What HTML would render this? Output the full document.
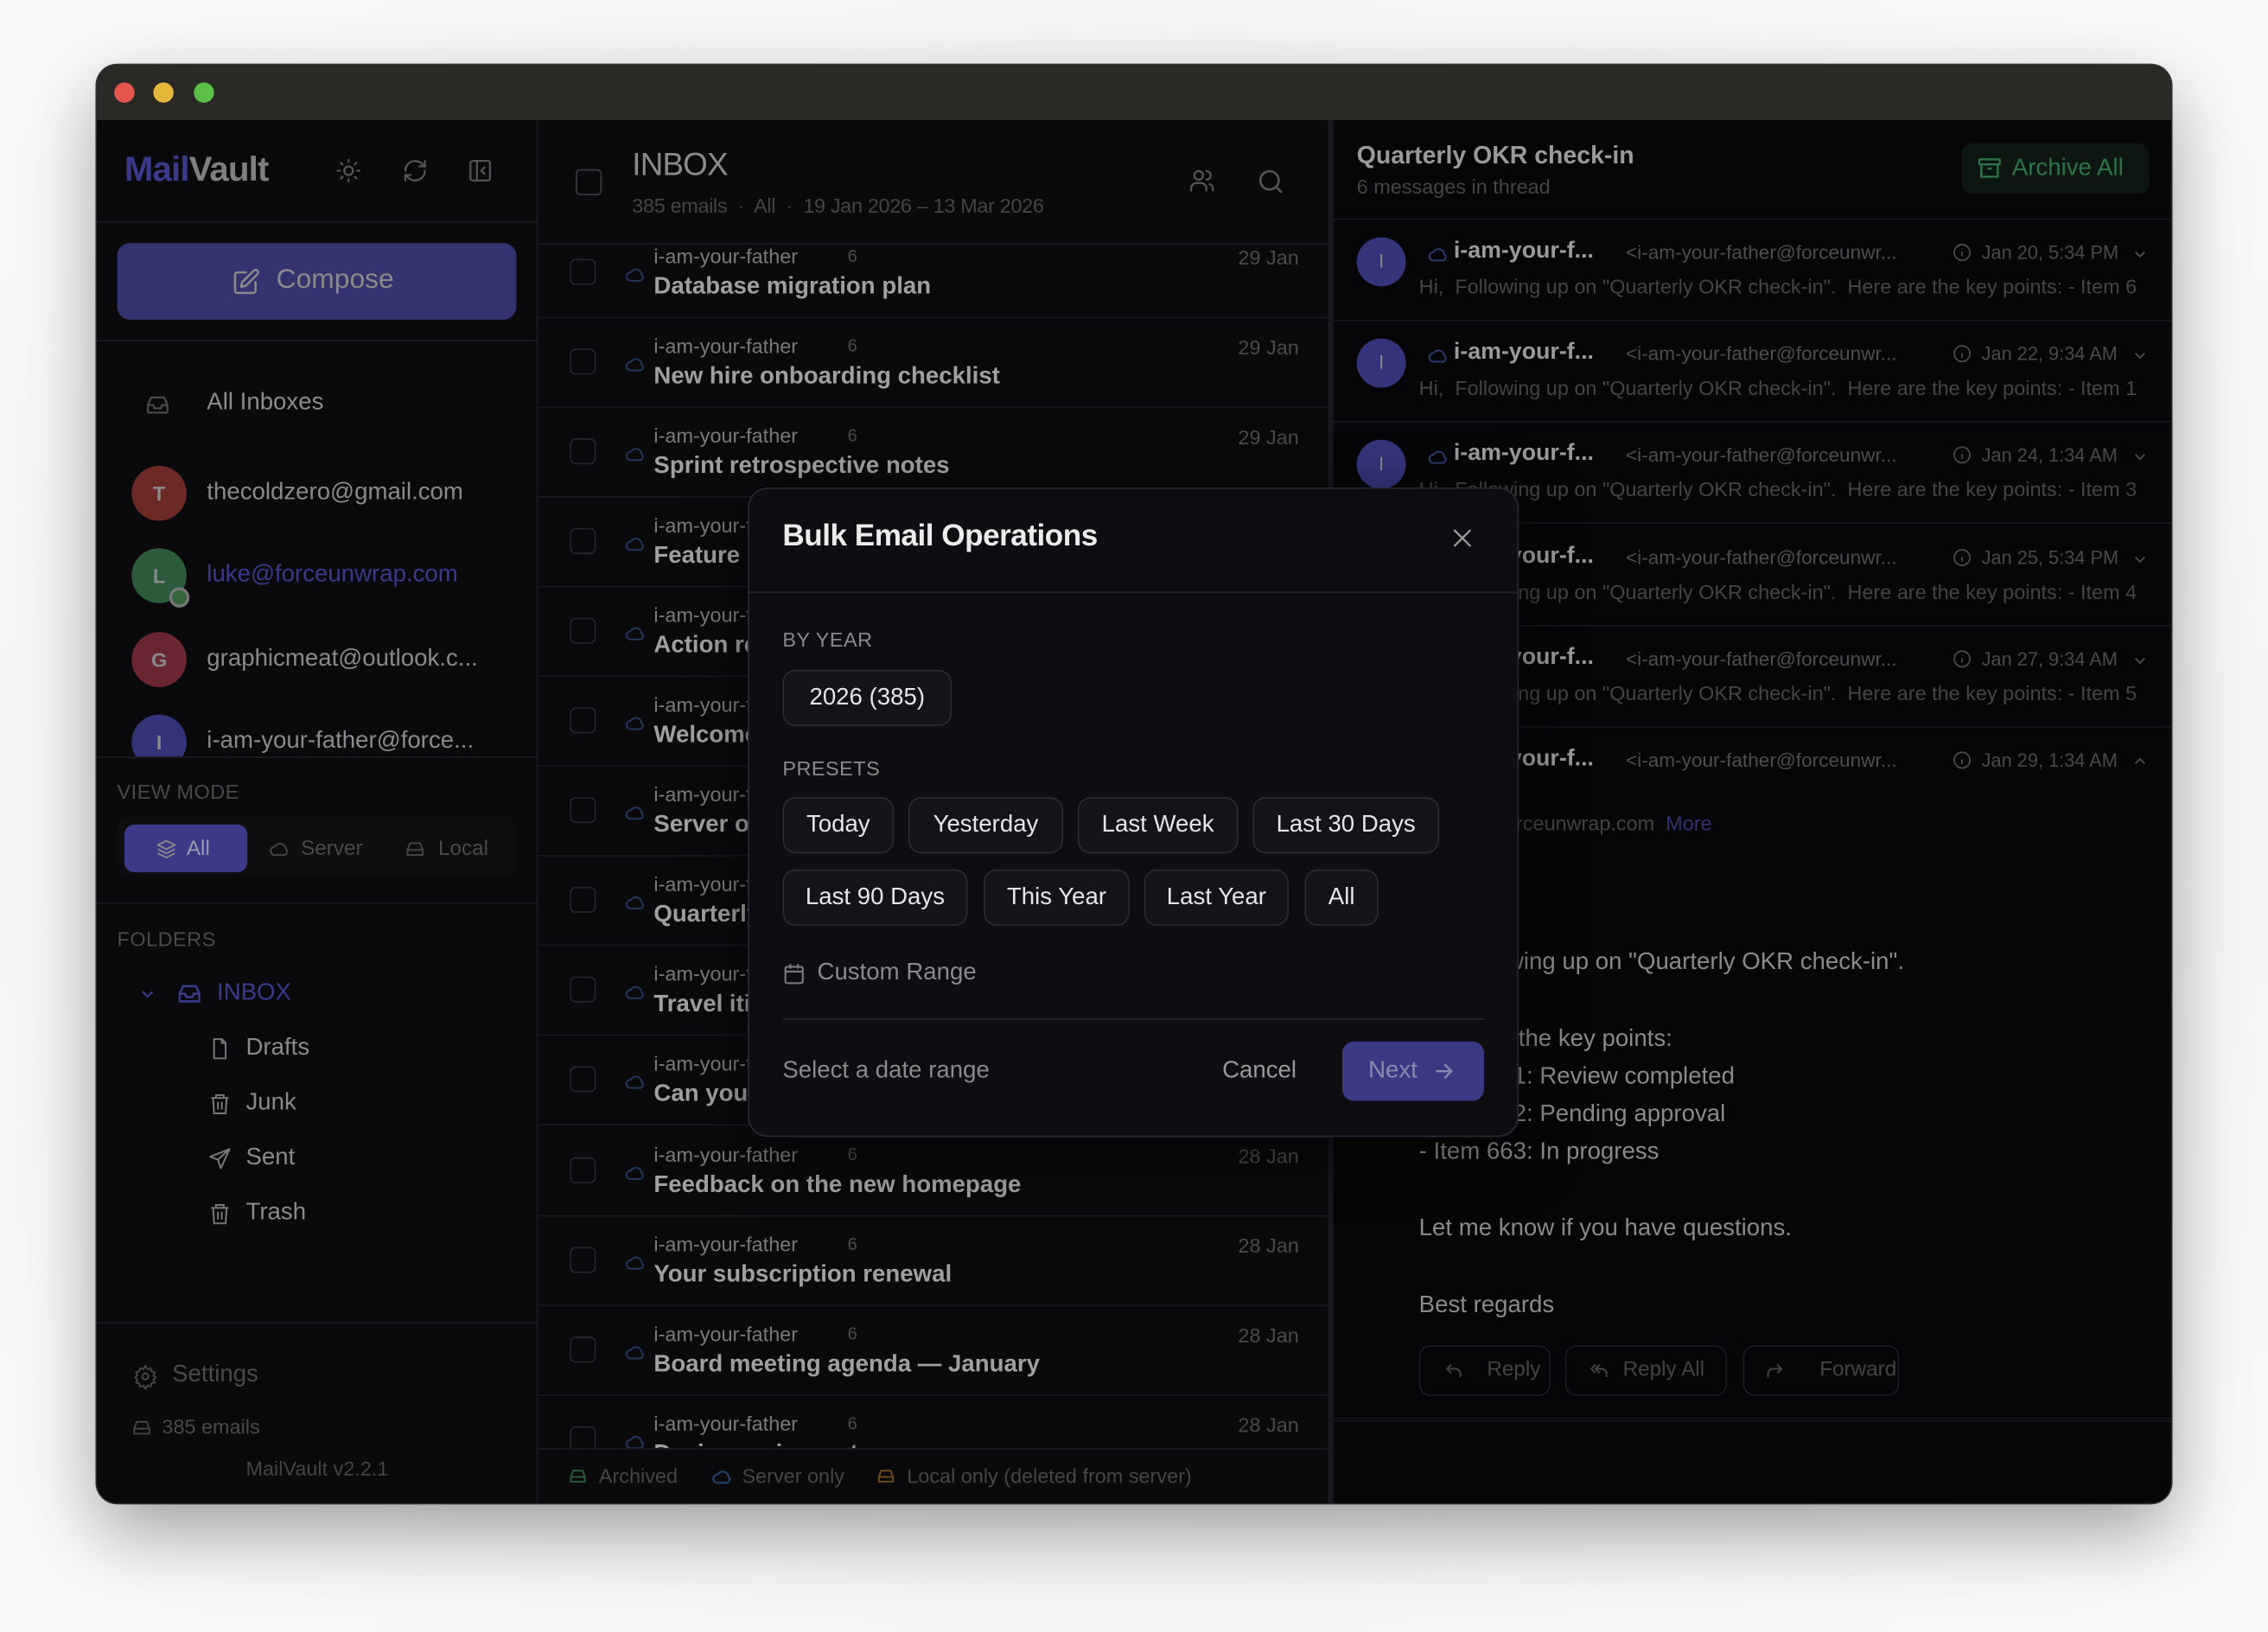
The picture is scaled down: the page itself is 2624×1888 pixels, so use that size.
<!DOCTYPE html>
<html><head><meta charset="utf-8"><style>
*{margin:0;padding:0;box-sizing:border-box}
html,body{width:2624px;height:1888px;overflow:hidden;background:#f3f3f3;font-family:"Liberation Sans",sans-serif}
#s{position:absolute;left:0;top:0;width:1568px;height:1128px;transform:scale(1.67347);transform-origin:0 0;background:radial-gradient(ellipse at 50% 50%,#e6e6e6 0%,#f5f5f5 70%,#fafafa 100%)}
.a{position:absolute;white-space:nowrap}
.win{position:absolute;left:67px;top:45px;width:1434px;height:994px;border-radius:14px;overflow:hidden;background:#0a0a0d;box-shadow:0 20px 50px rgba(0,0,0,.35),0 0 0 1px #3a3a3a}
.tb{position:absolute;left:0;top:0;width:1434px;height:38px;background:#292926}
.dot{position:absolute;top:12px;width:14px;height:14px;border-radius:50%}
svg{position:absolute;overflow:visible}
.ln{position:absolute;height:1px;background:#1b1b22}
.av{position:absolute;width:38px;height:38px;border-radius:50%;color:#8a8a8a;font-weight:bold;font-size:14px;text-align:center;line-height:38px}
.acc{position:absolute;left:76px;font-size:16.5px;color:#8a8a8a}
.fold{position:absolute;left:103px;font-size:16.5px;color:#8a8a8a}
.row{position:absolute;left:305px;width:546px;height:62px;border-bottom:1px solid #191920}
.row .cb{position:absolute;left:22px;top:12px;width:18px;height:18px;border:1.5px solid #26262c;border-radius:4px}
.row .nm{position:absolute;left:80px;top:1px;font-size:14px;color:#7a7a7a}
.row .ct{position:absolute;left:214px;top:2px;font-size:12px;color:#4a4a4a}
.row .dt{position:absolute;right:20px;top:2px;font-size:14px;color:#4a4a4a}
.row .sj{position:absolute;left:80px;top:20px;font-size:16.5px;font-weight:bold;color:#a0a0a0}
.msg{position:absolute;left:855px;width:579px;height:70px;border-bottom:1px solid #17171d}
.msg .av2{position:absolute;left:16px;top:12px;width:34px;height:34px;border-radius:50%;background:#34347a;color:#888;text-align:center;line-height:34px;font-size:13px}
.msg .n{position:absolute;left:83px;top:13px;font-size:16px;font-weight:bold;color:#9a9a9a}
.msg .e{position:absolute;left:202px;top:15px;font-size:13.5px;color:#4e4e4e}
.msg .d{position:absolute;left:448px;top:15px;font-size:13px;color:#4a4a4a}
.msg .p{position:absolute;left:59px;top:38px;font-size:14px;color:#454545;width:506px;overflow:hidden;white-space:nowrap}
.msg .ic1{left:65px;top:17px}
.msg .ic2{left:428px;top:16px}
.msg .ic3{left:552px;top:18px}
.chip{position:absolute;height:39px;border:1px solid #2a2b36;background:#13141a;border-radius:9px;color:#e6e6e6;font-size:16.5px;text-align:center;line-height:37px}
.lbl{position:absolute;font-size:14px;color:#8a8a8a;letter-spacing:.3px}
.bt{position:absolute;top:885px;height:35px;border:1px solid #1c1c22;border-radius:8px;color:#444;font-size:14.5px;line-height:33px}
.body{position:absolute;left:914px;font-size:16.5px;color:#8a8a8a}
</style></head><body><div id="s">
<div class="win">
 <div class="tb"></div>
 <div class="dot" style="left:12px;background:#e4564e"></div>
 <div class="dot" style="left:39px;background:#e3b73a"></div>
 <div class="dot" style="left:67px;background:#5cbf4a"></div>

 <div style="position:absolute;left:0;top:38px;width:305px;height:956px;background:#0a0a0d;border-right:1px solid #1b1b22"></div>
 <div class="a" style="left:19px;top:59px;font-size:24px;font-weight:bold;letter-spacing:-.5px"><span style="color:#3a3a8c">Mail</span><span style="color:#7f7f7f">Vault</span></div>
 <svg style="left:165px;top:64px" width="18" height="18" viewBox="0 0 24 24" fill="none" stroke="#555" stroke-width="1.8" stroke-linecap="round"><circle cx="12" cy="12" r="4"/><path d="M12 2v2M12 20v2M4.9 4.9l1.4 1.4M17.7 17.7l1.4 1.4M2 12h2M20 12h2M4.9 19.1l1.4-1.4M17.7 6.3l1.4-1.4"/></svg>
 <svg style="left:211px;top:64px" width="18" height="18" viewBox="0 0 24 24" fill="none" stroke="#555" stroke-width="1.8" stroke-linecap="round"><path d="M3 12a9 9 0 0 1 15.5-6.2L21 8M21 3v5h-5M21 12a9 9 0 0 1-15.5 6.2L3 16M3 21v-5h5"/></svg>
 <svg style="left:256px;top:64px" width="18" height="18" viewBox="0 0 24 24" fill="none" stroke="#555" stroke-width="1.8" stroke-linecap="round"><rect x="3" y="3" width="18" height="18" rx="2"/><path d="M9 3v18M16 9l-3 3 3 3"/></svg>
 <div class="ln" style="left:0;top:108px;width:305px"></div>
 <div style="position:absolute;left:14px;top:123px;width:276px;height:53px;border-radius:9px;background:#33336f"></div>
 <svg style="left:93px;top:140px" width="20" height="20" viewBox="0 0 24 24" fill="none" stroke="#8a8a8a" stroke-width="1.8" stroke-linecap="round" stroke-linejoin="round"><path d="M12 4H5a2 2 0 0 0-2 2v13a2 2 0 0 0 2 2h13a2 2 0 0 0 2-2v-7"/><path d="M18.5 2.5a2.1 2.1 0 0 1 3 3L12 15l-4 1 1-4z"/></svg>
 <div class="a" style="left:124px;top:138px;font-size:19px;color:#8a8a8a">Compose</div>
 <div class="ln" style="left:0;top:190px;width:305px"></div>
 <svg style="left:33px;top:226px" width="18" height="18" viewBox="0 0 24 24" fill="none" stroke="#4a4a4a" stroke-width="1.8" stroke-linejoin="round"><path d="M3 12l3-7h12l3 7v6a1 1 0 0 1-1 1H4a1 1 0 0 1-1-1z"/><path d="M3 12h5l1 3h6l1-3h5"/></svg>
 <div class="acc" style="top:224px;color:#8c8c8c">All Inboxes</div>
 <div class="av" style="left:24px;top:277px;background:#6c2a26">T</div>
 <div class="acc" style="top:286px">thecoldzero@gmail.com</div>
 <div class="av" style="left:24px;top:334px;background:#2c5b3c">L</div>
 <div style="position:absolute;left:50px;top:361px;width:14px;height:14px;border-radius:50%;background:#33663a;border:2.5px solid #777"></div>
 <div class="acc" style="top:343px;color:#3a3a8c">luke@forceunwrap.com</div>
 <div class="av" style="left:24px;top:392px;background:#6a2631">G</div>
 <div class="acc" style="top:401px">graphicmeat@outlook.c...</div>
 <div style="position:absolute;left:0;top:440px;width:305px;height:38px;overflow:hidden">
  <div class="av" style="left:24px;top:9px;background:#33337a">I</div>
  <div class="acc" style="top:18px">i-am-your-father@force...</div>
 </div>
 <div class="ln" style="left:0;top:478px;width:305px"></div>
 <div class="lbl" style="left:14px;top:494px;color:#4a4a4a">VIEW MODE</div>
 <div style="position:absolute;left:14px;top:519px;width:276px;height:41px;border-radius:9px;background:#0e0e11"></div>
 <div style="position:absolute;left:19px;top:525px;width:85px;height:33px;border-radius:7px;background:#3a3a88"></div>
 <svg style="left:41px;top:535px" width="14" height="14" viewBox="0 0 24 24" fill="none" stroke="#888" stroke-width="2" stroke-linejoin="round"><path d="M12 2l10 5-10 5L2 7z"/><path d="M2 12l10 5 10-5M2 17l10 5 10-5"/></svg>
 <div class="a" style="left:62px;top:534px;font-size:14.5px;color:#9a9ab0">All</div>
 <svg style="left:119px;top:535px" width="14" height="14" viewBox="0 0 24 24" fill="none" stroke="#444" stroke-width="2"><path d="M7 19a5 5 0 0 1 0-10 7 7 0 0 1 13 3 4 4 0 0 1-2 7z"/></svg>
 <div class="a" style="left:141px;top:534px;font-size:14.5px;color:#4a4a4a">Server</div>
 <svg style="left:213px;top:535px" width="14" height="14" viewBox="0 0 24 24" fill="none" stroke="#444" stroke-width="2"><path d="M3 13l3-8h12l3 8v6H3z M3 13h18"/></svg>
 <div class="a" style="left:236px;top:534px;font-size:14.5px;color:#4a4a4a">Local</div>
 <div class="ln" style="left:0;top:579px;width:305px"></div>
 <div class="lbl" style="left:14px;top:596px;color:#4a4a4a">FOLDERS</div>
 <svg style="left:29px;top:636px" width="12" height="12" viewBox="0 0 24 24" fill="none" stroke="#3a3a8c" stroke-width="2.5"><path d="M5 9l7 7 7-7"/></svg>
 <svg style="left:55px;top:633px" width="18" height="18" viewBox="0 0 24 24" fill="none" stroke="#3a3a8c" stroke-width="2" stroke-linejoin="round"><path d="M3 12l3-7h12l3 7v7H3z"/><path d="M3 12h5l1 3h6l1-3h5"/></svg>
 <div class="a" style="left:83px;top:632px;font-size:16.5px;color:#3a3a8c">INBOX</div>
 <svg style="left:77px;top:672px" width="16" height="16" viewBox="0 0 24 24" fill="none" stroke="#777" stroke-width="1.8" stroke-linejoin="round"><path d="M14 2H6v20h12V6z"/><path d="M14 2v4h4"/></svg>
 <div class="fold" style="top:670px">Drafts</div>
 <svg style="left:77px;top:710px" width="16" height="16" viewBox="0 0 24 24" fill="none" stroke="#777" stroke-width="1.8"><path d="M3 6h18M8 6V3h8v3M5 6l1 16h12l1-16M10 10v8M14 10v8"/></svg>
 <div class="fold" style="top:708px">Junk</div>
 <svg style="left:77px;top:748px" width="16" height="16" viewBox="0 0 24 24" fill="none" stroke="#777" stroke-width="1.8" stroke-linejoin="round"><path d="M22 2L2 10l8 3 3 9z M22 2L10 13"/></svg>
 <div class="fold" style="top:746px">Sent</div>
 <svg style="left:77px;top:786px" width="16" height="16" viewBox="0 0 24 24" fill="none" stroke="#777" stroke-width="1.8"><path d="M3 6h18M8 6V3h8v3M5 6l1 16h12l1-16M10 10v8M14 10v8"/></svg>
 <div class="fold" style="top:784px">Trash</div>
 <div class="ln" style="left:0;top:869px;width:305px"></div>
 <svg style="left:25px;top:898px" width="17" height="17" viewBox="0 0 24 24" fill="none" stroke="#444" stroke-width="1.8"><circle cx="12" cy="12" r="3"/><path d="M12 2l2 3 3-1 1 3 3 1-1 3 2 2-2 2 1 3-3 1-1 3-3-1-2 3-2-3-3 1-1-3-3-1 1-3-2-2 2-2-1-3 3-1 1-3 3 1z"/></svg>
 <div class="a" style="left:52px;top:896px;font-size:16.5px;color:#4a4a4a">Settings</div>
 <svg style="left:24px;top:935px" width="14" height="14" viewBox="0 0 24 24" fill="none" stroke="#444" stroke-width="2"><path d="M3 13l3-8h12l3 8v6H3z M3 13h18"/></svg>
 <div class="a" style="left:45px;top:933px;font-size:14px;color:#4a4a4a">385 emails</div>
 <div class="a" style="left:103px;top:962px;font-size:14px;color:#444">MailVault v2.2.1</div>

 <div style="position:absolute;left:305px;top:38px;width:546px;height:956px;background:#0a0a0d"></div>
 <div style="position:absolute;left:331px;top:72px;width:18px;height:18px;border:1.5px solid #3a3a40;border-radius:3px"></div>
 <div class="a" style="left:370px;top:56px;font-size:22px;color:#8a8a8a;letter-spacing:-.5px">INBOX</div>
 <div class="a" style="left:370px;top:89px;font-size:14px;color:#454545;letter-spacing:-.2px">385 emails&nbsp; ·&nbsp; All&nbsp; ·&nbsp; 19 Jan 2026 – 13 Mar 2026</div>
 <svg style="left:755px;top:71px" width="18" height="18" viewBox="0 0 24 24" fill="none" stroke="#555" stroke-width="1.8" stroke-linecap="round"><circle cx="9" cy="7" r="4"/><path d="M2 21v-2a5 5 0 0 1 5-5h4a5 5 0 0 1 5 5v2M16 3a4 4 0 0 1 0 8M22 21v-2a4 4 0 0 0-3-4"/></svg>
 <svg style="left:802px;top:71px" width="19" height="19" viewBox="0 0 24 24" fill="none" stroke="#555" stroke-width="2" stroke-linecap="round"><circle cx="11" cy="11" r="8"/><path d="M21 21l-4.3-4.3"/></svg>
 <div class="ln" style="left:305px;top:123px;width:546px"></div>

 <div style="position:absolute;left:851px;top:38px;width:4px;height:956px;background:#17171c"></div>
 <div style="position:absolute;left:855px;top:38px;width:579px;height:956px;background:#060608"></div>
 <div class="a" style="left:871px;top:53px;font-size:17px;font-weight:bold;color:#9a9a9a">Quarterly OKR check-in</div>
 <div class="a" style="left:871px;top:76px;font-size:14px;color:#454545">6 messages in thread</div>
 <div style="position:absolute;left:1289px;top:54px;width:130px;height:35px;border-radius:8px;background:#0d1611"></div>
 <svg style="left:1300px;top:63px" width="17" height="17" viewBox="0 0 24 24" fill="none" stroke="#2e7448" stroke-width="2"><rect x="2" y="3" width="20" height="5" rx="1"/><path d="M4 8v12h16V8M10 12h4"/></svg>
 <div class="a" style="left:1324px;top:62px;font-size:16.5px;color:#2e7448">Archive All</div>
 <div class="ln" style="left:855px;top:106px;width:579px;background:#17171d"></div>

 <div style="position:absolute;left:305px;top:956px;width:546px;height:38px;background:#0a0a0d;border-top:1px solid #1b1b22"></div>
 <svg style="left:326px;top:969px" width="13" height="13" viewBox="0 0 24 24" fill="none" stroke="#2a5a3a" stroke-width="2.2"><path d="M3 13l3-8h12l3 8v6H3z M3 13h18"/></svg>
 <div class="a" style="left:347px;top:967px;font-size:14px;color:#464646">Archived</div>
 <svg style="left:425px;top:969px" width="14" height="14" viewBox="0 0 24 24" fill="none" stroke="#25406a" stroke-width="2.2"><path d="M7 19a5 5 0 0 1 0-10 7 7 0 0 1 13 3 4 4 0 0 1-2 7z"/></svg>
 <div class="a" style="left:446px;top:967px;font-size:14px;color:#464646">Server only</div>
 <svg style="left:539px;top:969px" width="13" height="13" viewBox="0 0 24 24" fill="none" stroke="#6a4a1c" stroke-width="2.2"><path d="M3 13l3-8h12l3 8v6H3z M3 13h18"/></svg>
 <div class="a" style="left:560px;top:967px;font-size:14px;color:#464646">Local only (deleted from server)</div>
</div>

<div style="position:absolute;left:67px;top:45px;width:1434px;height:994px;overflow:hidden;border-radius:14px">
 <div style="position:absolute;left:305px;top:124px;width:546px;height:832px;overflow:hidden">
  <div style="position:absolute;left:-305px;top:-124px">
   <div class="row" style="top:113px"><div class="cb" style="top:21px"></div><svg style="left:60px;top:25px" width="14" height="14" viewBox="0 0 24 24" fill="none" stroke="#24365e" stroke-width="2"><path d="M7 19a5 5 0 0 1 0-10 7 7 0 0 1 13 3 4 4 0 0 1-2 7z"/></svg><div class="nm" style="top:11px">i-am-your-father</div><div class="ct" style="top:12px">6</div><div class="dt" style="top:12px">29 Jan</div><div class="sj" style="top:31px">Database migration plan</div></div>
   <div class="row" style="top:175px"><div class="cb" style="top:21px"></div><svg style="left:60px;top:25px" width="14" height="14" viewBox="0 0 24 24" fill="none" stroke="#24365e" stroke-width="2"><path d="M7 19a5 5 0 0 1 0-10 7 7 0 0 1 13 3 4 4 0 0 1-2 7z"/></svg><div class="nm" style="top:11px">i-am-your-father</div><div class="ct" style="top:12px">6</div><div class="dt" style="top:12px">29 Jan</div><div class="sj" style="top:31px">New hire onboarding checklist</div></div>
   <div class="row" style="top:237px"><div class="cb" style="top:21px"></div><svg style="left:60px;top:25px" width="14" height="14" viewBox="0 0 24 24" fill="none" stroke="#24365e" stroke-width="2"><path d="M7 19a5 5 0 0 1 0-10 7 7 0 0 1 13 3 4 4 0 0 1-2 7z"/></svg><div class="nm" style="top:11px">i-am-your-father</div><div class="ct" style="top:12px">6</div><div class="dt" style="top:12px">29 Jan</div><div class="sj" style="top:31px">Sprint retrospective notes</div></div>
   <div class="row" style="top:299px"><div class="cb" style="top:21px"></div><svg style="left:60px;top:25px" width="14" height="14" viewBox="0 0 24 24" fill="none" stroke="#24365e" stroke-width="2"><path d="M7 19a5 5 0 0 1 0-10 7 7 0 0 1 13 3 4 4 0 0 1-2 7z"/></svg><div class="nm" style="top:11px">i-am-your-father</div><div class="sj" style="top:31px">Feature request</div></div>
   <div class="row" style="top:361px"><div class="cb" style="top:21px"></div><svg style="left:60px;top:25px" width="14" height="14" viewBox="0 0 24 24" fill="none" stroke="#24365e" stroke-width="2"><path d="M7 19a5 5 0 0 1 0-10 7 7 0 0 1 13 3 4 4 0 0 1-2 7z"/></svg><div class="nm" style="top:11px">i-am-your-father</div><div class="sj" style="top:31px">Action required</div></div>
   <div class="row" style="top:423px"><div class="cb" style="top:21px"></div><svg style="left:60px;top:25px" width="14" height="14" viewBox="0 0 24 24" fill="none" stroke="#24365e" stroke-width="2"><path d="M7 19a5 5 0 0 1 0-10 7 7 0 0 1 13 3 4 4 0 0 1-2 7z"/></svg><div class="nm" style="top:11px">i-am-your-father</div><div class="sj" style="top:31px">Welcome aboard</div></div>
   <div class="row" style="top:485px"><div class="cb" style="top:21px"></div><svg style="left:60px;top:25px" width="14" height="14" viewBox="0 0 24 24" fill="none" stroke="#24365e" stroke-width="2"><path d="M7 19a5 5 0 0 1 0-10 7 7 0 0 1 13 3 4 4 0 0 1-2 7z"/></svg><div class="nm" style="top:11px">i-am-your-father</div><div class="sj" style="top:31px">Server outage</div></div>
   <div class="row" style="top:547px"><div class="cb" style="top:21px"></div><svg style="left:60px;top:25px" width="14" height="14" viewBox="0 0 24 24" fill="none" stroke="#24365e" stroke-width="2"><path d="M7 19a5 5 0 0 1 0-10 7 7 0 0 1 13 3 4 4 0 0 1-2 7z"/></svg><div class="nm" style="top:11px">i-am-your-father</div><div class="sj" style="top:31px">Quarterly OKR</div></div>
   <div class="row" style="top:609px"><div class="cb" style="top:21px"></div><svg style="left:60px;top:25px" width="14" height="14" viewBox="0 0 24 24" fill="none" stroke="#24365e" stroke-width="2"><path d="M7 19a5 5 0 0 1 0-10 7 7 0 0 1 13 3 4 4 0 0 1-2 7z"/></svg><div class="nm" style="top:11px">i-am-your-father</div><div class="sj" style="top:31px">Travel itinerary</div></div>
   <div class="row" style="top:671px"><div class="cb" style="top:21px"></div><svg style="left:60px;top:25px" width="14" height="14" viewBox="0 0 24 24" fill="none" stroke="#24365e" stroke-width="2"><path d="M7 19a5 5 0 0 1 0-10 7 7 0 0 1 13 3 4 4 0 0 1-2 7z"/></svg><div class="nm" style="top:11px">i-am-your-father</div><div class="sj" style="top:31px">Can you review</div></div>
   <div class="row" style="top:734px"><div class="cb" style="top:21px"></div><svg style="left:60px;top:25px" width="14" height="14" viewBox="0 0 24 24" fill="none" stroke="#24365e" stroke-width="2"><path d="M7 19a5 5 0 0 1 0-10 7 7 0 0 1 13 3 4 4 0 0 1-2 7z"/></svg><div class="nm" style="top:11px">i-am-your-father</div><div class="ct" style="top:12px">6</div><div class="dt" style="top:12px">28 Jan</div><div class="sj" style="top:31px">Feedback on the new homepage</div></div>
   <div class="row" style="top:796px"><div class="cb" style="top:21px"></div><svg style="left:60px;top:25px" width="14" height="14" viewBox="0 0 24 24" fill="none" stroke="#24365e" stroke-width="2"><path d="M7 19a5 5 0 0 1 0-10 7 7 0 0 1 13 3 4 4 0 0 1-2 7z"/></svg><div class="nm" style="top:11px">i-am-your-father</div><div class="ct" style="top:12px">6</div><div class="dt" style="top:12px">28 Jan</div><div class="sj" style="top:31px">Your subscription renewal</div></div>
   <div class="row" style="top:858px"><div class="cb" style="top:21px"></div><svg style="left:60px;top:25px" width="14" height="14" viewBox="0 0 24 24" fill="none" stroke="#24365e" stroke-width="2"><path d="M7 19a5 5 0 0 1 0-10 7 7 0 0 1 13 3 4 4 0 0 1-2 7z"/></svg><div class="nm" style="top:11px">i-am-your-father</div><div class="ct" style="top:12px">6</div><div class="dt" style="top:12px">28 Jan</div><div class="sj" style="top:31px">Board meeting agenda — January</div></div>
   <div class="row" style="top:920px"><div class="cb" style="top:21px"></div><svg style="left:60px;top:25px" width="14" height="14" viewBox="0 0 24 24" fill="none" stroke="#24365e" stroke-width="2"><path d="M7 19a5 5 0 0 1 0-10 7 7 0 0 1 13 3 4 4 0 0 1-2 7z"/></svg><div class="nm" style="top:11px">i-am-your-father</div><div class="ct" style="top:12px">6</div><div class="dt" style="top:12px">28 Jan</div><div class="sj" style="top:31px">Design review notes</div></div>
  </div>
 </div>

 <div class="msg" style="top:107px"><div class="av2">I</div><svg class="ic1" width="14" height="14" viewBox="0 0 24 24" fill="none" stroke="#2a3a70" stroke-width="2"><path d="M7 19a5 5 0 0 1 0-10 7 7 0 0 1 13 3 4 4 0 0 1-2 7z"/></svg><div class="n">i-am-your-f...</div><div class="e">&lt;i-am-your-father@forceunwr...</div><svg class="ic2" width="13" height="13" viewBox="0 0 24 24" fill="none" stroke="#4a4a4a" stroke-width="2"><circle cx="12" cy="12" r="10"/><path d="M12 11v6M12 7v.5"/></svg><div class="d">Jan 20, 5:34 PM</div><svg class="ic3" width="11" height="11" viewBox="0 0 24 24" fill="none" stroke="#4a4a4a" stroke-width="2.5"><path d="M5 9l7 7 7-7"/></svg><div class="p">Hi,&nbsp; Following up on "Quarterly OKR check-in".&nbsp; Here are the key points: - Item 6</div></div>
 <div class="msg" style="top:177px"><div class="av2">I</div><svg class="ic1" width="14" height="14" viewBox="0 0 24 24" fill="none" stroke="#2a3a70" stroke-width="2"><path d="M7 19a5 5 0 0 1 0-10 7 7 0 0 1 13 3 4 4 0 0 1-2 7z"/></svg><div class="n">i-am-your-f...</div><div class="e">&lt;i-am-your-father@forceunwr...</div><svg class="ic2" width="13" height="13" viewBox="0 0 24 24" fill="none" stroke="#4a4a4a" stroke-width="2"><circle cx="12" cy="12" r="10"/><path d="M12 11v6M12 7v.5"/></svg><div class="d">Jan 22, 9:34 AM</div><svg class="ic3" width="11" height="11" viewBox="0 0 24 24" fill="none" stroke="#4a4a4a" stroke-width="2.5"><path d="M5 9l7 7 7-7"/></svg><div class="p">Hi,&nbsp; Following up on "Quarterly OKR check-in".&nbsp; Here are the key points: - Item 1</div></div>
 <div class="msg" style="top:247px"><div class="av2">I</div><svg class="ic1" width="14" height="14" viewBox="0 0 24 24" fill="none" stroke="#2a3a70" stroke-width="2"><path d="M7 19a5 5 0 0 1 0-10 7 7 0 0 1 13 3 4 4 0 0 1-2 7z"/></svg><div class="n">i-am-your-f...</div><div class="e">&lt;i-am-your-father@forceunwr...</div><svg class="ic2" width="13" height="13" viewBox="0 0 24 24" fill="none" stroke="#4a4a4a" stroke-width="2"><circle cx="12" cy="12" r="10"/><path d="M12 11v6M12 7v.5"/></svg><div class="d">Jan 24, 1:34 AM</div><svg class="ic3" width="11" height="11" viewBox="0 0 24 24" fill="none" stroke="#4a4a4a" stroke-width="2.5"><path d="M5 9l7 7 7-7"/></svg><div class="p">Hi,&nbsp; Following up on "Quarterly OKR check-in".&nbsp; Here are the key points: - Item 3</div></div>
 <div class="msg" style="top:318px"><div class="av2">I</div><svg class="ic1" width="14" height="14" viewBox="0 0 24 24" fill="none" stroke="#2a3a70" stroke-width="2"><path d="M7 19a5 5 0 0 1 0-10 7 7 0 0 1 13 3 4 4 0 0 1-2 7z"/></svg><div class="n">i-am-your-f...</div><div class="e">&lt;i-am-your-father@forceunwr...</div><svg class="ic2" width="13" height="13" viewBox="0 0 24 24" fill="none" stroke="#4a4a4a" stroke-width="2"><circle cx="12" cy="12" r="10"/><path d="M12 11v6M12 7v.5"/></svg><div class="d">Jan 25, 5:34 PM</div><svg class="ic3" width="11" height="11" viewBox="0 0 24 24" fill="none" stroke="#4a4a4a" stroke-width="2.5"><path d="M5 9l7 7 7-7"/></svg><div class="p">Hi,&nbsp; Following up on "Quarterly OKR check-in".&nbsp; Here are the key points: - Item 4</div></div>
 <div class="msg" style="top:388px"><div class="av2">I</div><svg class="ic1" width="14" height="14" viewBox="0 0 24 24" fill="none" stroke="#2a3a70" stroke-width="2"><path d="M7 19a5 5 0 0 1 0-10 7 7 0 0 1 13 3 4 4 0 0 1-2 7z"/></svg><div class="n">i-am-your-f...</div><div class="e">&lt;i-am-your-father@forceunwr...</div><svg class="ic2" width="13" height="13" viewBox="0 0 24 24" fill="none" stroke="#4a4a4a" stroke-width="2"><circle cx="12" cy="12" r="10"/><path d="M12 11v6M12 7v.5"/></svg><div class="d">Jan 27, 9:34 AM</div><svg class="ic3" width="11" height="11" viewBox="0 0 24 24" fill="none" stroke="#4a4a4a" stroke-width="2.5"><path d="M5 9l7 7 7-7"/></svg><div class="p">Hi,&nbsp; Following up on "Quarterly OKR check-in".&nbsp; Here are the key points: - Item 5</div></div>
 <div class="msg" style="top:458px;height:480px"><div class="av2">I</div><svg class="ic1" width="14" height="14" viewBox="0 0 24 24" fill="none" stroke="#2a3a70" stroke-width="2"><path d="M7 19a5 5 0 0 1 0-10 7 7 0 0 1 13 3 4 4 0 0 1-2 7z"/></svg><div class="n">i-am-your-f...</div><div class="e">&lt;i-am-your-father@forceunwr...</div><svg class="ic2" width="13" height="13" viewBox="0 0 24 24" fill="none" stroke="#4a4a4a" stroke-width="2"><circle cx="12" cy="12" r="10"/><path d="M12 11v6M12 7v.5"/></svg><div class="d">Jan 29, 1:34 AM</div><svg class="ic3" width="11" height="11" viewBox="0 0 24 24" fill="none" stroke="#4a4a4a" stroke-width="2.5"><path d="M5 15l7-7 7 7"/></svg>
  <div class="a" style="left:59px;top:58px;font-size:14px;color:#454545">to luke@forceunwrap.com&nbsp;&nbsp;<span style="color:#33336f">More</span></div>
 </div>
 <div class="body" style="top:611px">Hi, Following up on "Quarterly OKR check-in".</div>
 <div class="body" style="top:664px">Here are the key points:</div>
 <div class="body" style="top:690px">- Item 861: Review completed</div>
 <div class="body" style="top:716px">- Item 502: Pending approval</div>
 <div class="body" style="top:742px">- Item 663: In progress</div>
 <div class="body" style="top:795px">Let me know if you have questions.</div>
 <div class="body" style="top:848px">Best regards</div>
 <div class="bt" style="left:914px;width:91px;padding-left:46px">Reply</div>
 <div class="bt" style="left:1015px;width:112px;padding-left:39px">Reply All</div>
 <div class="bt" style="left:1138px;width:108px;padding-left:52px">Forward</div>
 <svg style="left:931px;top:896px" width="14" height="14" viewBox="0 0 24 24" fill="none" stroke="#444" stroke-width="2"><path d="M9 14L4 9l5-5M4 9h10a6 6 0 0 1 6 6v4"/></svg>
 <svg style="left:1031px;top:896px" width="16" height="14" viewBox="0 0 24 24" fill="none" stroke="#444" stroke-width="2"><path d="M7 14L2 9l5-5M12 14L7 9l5-5M7 9h7a6 6 0 0 1 6 6v4"/></svg>
 <svg style="left:1153px;top:896px" width="14" height="14" viewBox="0 0 24 24" fill="none" stroke="#444" stroke-width="2"><path d="M15 14l5-5-5-5M20 9H10a6 6 0 0 0-6 6v4"/></svg>
 <div class="ln" style="left:855px;top:935px;width:579px;background:#17171d"></div>
</div>

<div style="position:absolute;left:517px;top:337px;width:533px;height:449px;background:#0d0d12;border:1px solid #2a2a36;border-radius:14px;box-shadow:0 10px 40px rgba(0,0,0,.5)"></div>
<div class="a" style="left:541px;top:359px;font-size:21px;font-weight:bold;color:#ececec;letter-spacing:-.3px">Bulk Email Operations</div>
<svg style="left:1004px;top:365px" width="14" height="14" viewBox="0 0 24 24" fill="none" stroke="#999" stroke-width="2.4" stroke-linecap="round"><path d="M3 3l18 18M21 3L3 21"/></svg>
<div class="ln" style="left:518px;top:409px;width:531px;background:#262632"></div>
<div class="lbl" style="left:541px;top:434px">BY YEAR</div>
<div class="chip" style="left:541px;top:463px;width:117px">2026 (385)</div>
<div class="lbl" style="left:541px;top:523px">PRESETS</div>
<div class="chip" style="left:541px;top:551px;width:77px">Today</div>
<div class="chip" style="left:628px;top:551px;width:107px">Yesterday</div>
<div class="chip" style="left:745px;top:551px;width:111px">Last Week</div>
<div class="chip" style="left:866px;top:551px;width:129px">Last 30 Days</div>
<div class="chip" style="left:541px;top:601px;width:128px">Last 90 Days</div>
<div class="chip" style="left:680px;top:601px;width:101px">This Year</div>
<div class="chip" style="left:791px;top:601px;width:100px">Last Year</div>
<div class="chip" style="left:902px;top:601px;width:51px">All</div>
<svg style="left:541px;top:665px" width="16" height="16" viewBox="0 0 24 24" fill="none" stroke="#777" stroke-width="2"><rect x="3" y="5" width="18" height="17" rx="2"/><path d="M3 10h18M8 2v5M16 2v5"/></svg>
<div class="a" style="left:565px;top:663px;font-size:16.5px;color:#8a8a8a">Custom Range</div>
<div class="ln" style="left:541px;top:704px;width:485px;background:#262632"></div>
<div class="a" style="left:541px;top:731px;font-size:16.5px;color:#8a8a8a">Select a date range</div>
<div class="a" style="left:845px;top:731px;font-size:16.5px;color:#9a9a9a">Cancel</div>
<div style="position:absolute;left:928px;top:720px;width:98px;height:41px;border-radius:8px;background:#393984"></div>
<div class="a" style="left:946px;top:731px;font-size:16.5px;color:#8a8ab0">Next</div>
<svg style="left:991px;top:733px" width="15" height="15" viewBox="0 0 24 24" fill="none" stroke="#8a8ab0" stroke-width="2.2" stroke-linecap="round"><path d="M4 12h16M13 5l7 7-7 7"/></svg>
</div></body></html>
